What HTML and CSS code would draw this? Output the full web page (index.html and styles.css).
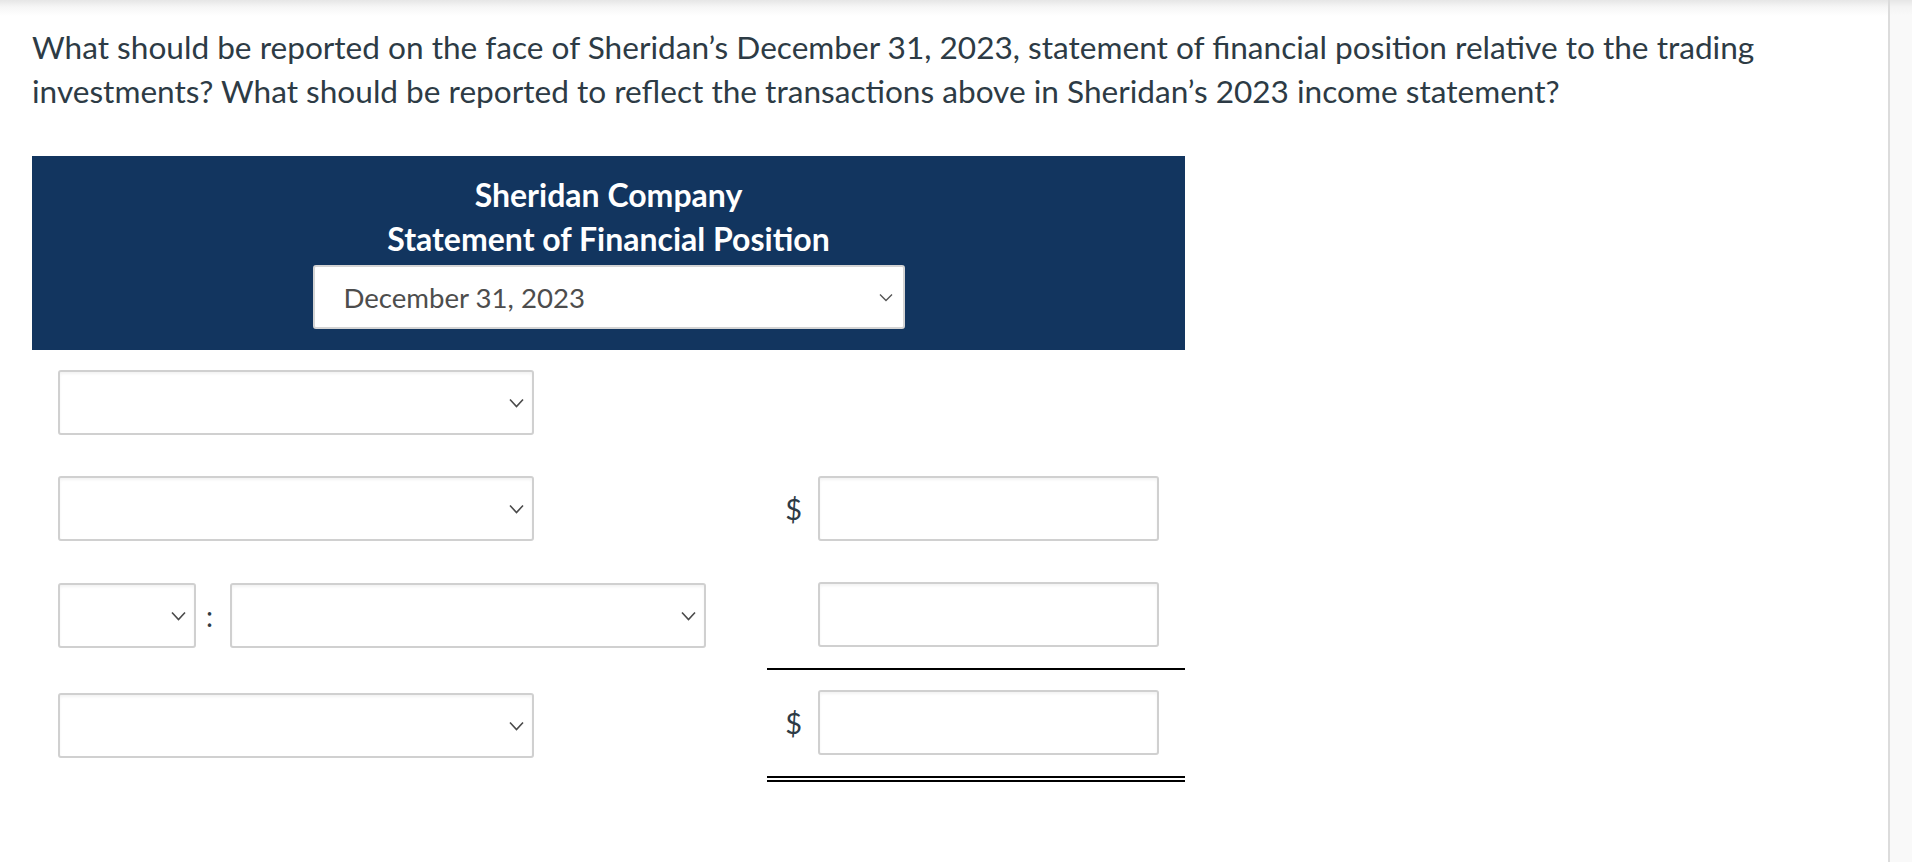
FILE: index.html
```html
<!DOCTYPE html>
<html lang="en">
<head>
<meta charset="utf-8">
<title>Sheridan Company</title>
<link rel="stylesheet" href="styles.css">
</head>
<body>
<div class="page">
  <main class="main">
    <p class="question">What should be reported on the face of Sheridan’s December 31, 2023, statement of financial position relative to the trading investments? What should be reported to reflect the transactions above in Sheridan’s 2023 income statement?</p>

    <div class="statement">
      <div class="sheader">
        <div class="stitle">Sheridan Company</div>
        <div class="stitle">Statement of Financial Position</div>
        <div class="datesel">
          <span class="datetext">December 31, 2023</span>
          <svg class="chev" width="14" height="9" viewBox="0 0 14 9"><polyline points="1,1.5 7,7.5 13,1.5" fill="none" stroke="#555" stroke-width="1.4"/></svg>
        </div>
      </div>

      <div class="row">
        <div class="lcell">
          <div class="sel sel-lg"><svg class="chev" width="15" height="10" viewBox="0 0 15 10"><polyline points="1,1.5 7.5,8.5 14,1.5" fill="none" stroke="#4a4a4a" stroke-width="1.6"/></svg></div>
        </div>
        <div class="rcell"></div>
      </div>

      <div class="row">
        <div class="lcell">
          <div class="sel sel-lg"><svg class="chev" width="15" height="10" viewBox="0 0 15 10"><polyline points="1,1.5 7.5,8.5 14,1.5" fill="none" stroke="#4a4a4a" stroke-width="1.6"/></svg></div>
        </div>
        <div class="rcell">
          <span class="dollar">$</span>
          <div class="inp"></div>
        </div>
      </div>

      <div class="row">
        <div class="lcell">
          <div class="sel sel-sm"><svg class="chev" width="15" height="10" viewBox="0 0 15 10"><polyline points="1,1.5 7.5,8.5 14,1.5" fill="none" stroke="#4a4a4a" stroke-width="1.6"/></svg></div>
          <span class="colon">:</span>
          <div class="sel sel-lg"><svg class="chev" width="15" height="10" viewBox="0 0 15 10"><polyline points="1,1.5 7.5,8.5 14,1.5" fill="none" stroke="#4a4a4a" stroke-width="1.6"/></svg></div>
        </div>
        <div class="rcell rule-single">
          <div class="inp"></div>
        </div>
      </div>

      <div class="row">
        <div class="lcell">
          <div class="sel sel-lg"><svg class="chev" width="15" height="10" viewBox="0 0 15 10"><polyline points="1,1.5 7.5,8.5 14,1.5" fill="none" stroke="#4a4a4a" stroke-width="1.6"/></svg></div>
        </div>
        <div class="rcell rule-double">
          <span class="dollar">$</span>
          <div class="inp"></div>
        </div>
      </div>
    </div>
  </main>
  <aside class="side"></aside>
</div>
</body>
</html>
```

FILE: styles.css
```css
* { box-sizing: border-box; }

html, body {
  margin: 0;
  padding: 0;
  height: 100%;
}

body {
  font-family: Lato, "Noto Sans", sans-serif;
  color: #2d3b45;
  background: #fff;
  overflow: hidden;
}

.page {
  display: flex;
  height: 862px;
  background: linear-gradient(to bottom, #e6e6e6 0px, #f6f6f6 7px, #ffffff 16px);
}

.main {
  flex: 1;
  padding: 25px 0 0 32px;
}

.side {
  width: 24px;
  border-left: 2px solid #dcdcdc;
  background: linear-gradient(to bottom, #e6e6e6 0px, #f4f4f4 7px, #f9f9f9 16px);
}

.question {
  margin: 0;
  font-size: 31.6px;
  line-height: 44px;
  padding-right: 60px;
}

.statement {
  margin-top: 43px;
  width: 1153px;
}

.sheader {
  background: #12355f;
  padding: 17px 0 21px;
  display: flex;
  flex-direction: column;
  align-items: center;
}

.stitle {
  color: #fff;
  font-weight: 700;
  font-size: 32px;
  line-height: 44px;
}

.datesel {
  margin-top: 4px;
  width: 592px;
  height: 64px;
  background: #fff;
  border: 2px solid #d4d4d4;
  border-radius: 3px;
  display: flex;
  align-items: center;
  justify-content: space-between;
  padding: 0 10px 0 29px;
}

.datetext {
  font-size: 27.6px;
  color: #4d4d4d;
}

.row {
  display: grid;
  grid-template-columns: 735px 418px;
}

.lcell {
  padding: 20px 0 21px 26px;
  display: flex;
  align-items: center;
}

.rcell {
  padding: 20px 26px 21px 0;
  display: flex;
  justify-content: flex-end;
  align-items: center;
  gap: 16px;
}

.rule-single {
  border-bottom: 2px solid #000;
}

.rule-double {
  border-bottom: 6px double #000;
}

.sel {
  height: 65px;
  background: #fff;
  border: 2px solid #d0d0d0;
  border-radius: 3px;
  box-shadow: inset 0 2px 3px rgba(0, 0, 0, 0.05);
  display: flex;
  align-items: center;
  justify-content: flex-end;
  padding-right: 8px;
}

.sel-lg { width: 476px; }
.sel-sm { width: 138px; }

.colon {
  width: 34px;
  padding-right: 7px;
  text-align: center;
  font-size: 28px;
  color: #2d3b45;
  line-height: 1;
}

.dollar {
  font-size: 29px;
  color: #2d3b45;
}

.inp {
  width: 341px;
  height: 65px;
  background: #fff;
  border: 2px solid #d0d0d0;
  border-radius: 3px;
  box-shadow: inset 0 2px 3px rgba(0, 0, 0, 0.05);
}

.chev { display: block; }
```
